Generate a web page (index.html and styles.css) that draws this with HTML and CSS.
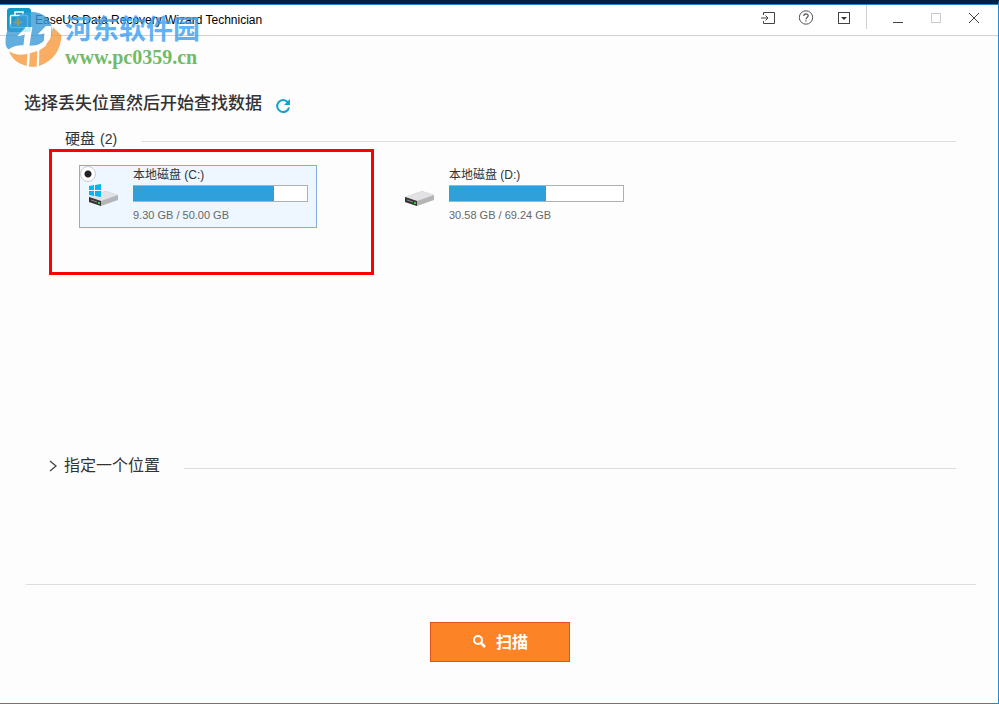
FILE: index.html
```html
<!DOCTYPE html>
<html lang="zh-CN">
<head>
    <meta charset="UTF-8">
    <meta name="viewport" content="width=device-width, initial-scale=1.0">
    <title>EaseUS Data Recovery Wizard Technician</title>
    <link rel="stylesheet" href="styles.css">
</head>
<body>

    <div class="window">
        <header class="titlebar">
            <svg class="app-icon" width="24" height="24" viewBox="0 0 24 24">
                <rect width="24" height="24" rx="3" fill="#0f9ccb"/>
                <path d="M8 7V4h8v3" fill="none" stroke="#fff" stroke-width="1.5"/>
                <rect x="3.5" y="7.5" width="17" height="12" rx="1" fill="none" stroke="#fff" stroke-width="1.5"/>
            </svg>
            <h1 class="app-title">EaseUS Data Recovery Wizard Technician</h1>
            <div class="tools">
                <button type="button" aria-label="导入">
                    <svg width="14" height="14" viewBox="0 0 14 14" fill="none" stroke="#444">
                        <path d="M2.5 4V1.5h11v11h-11V10M0 7h7M4.5 4.5L7 7 4.5 9.500"/>
                    </svg>
                </button>
                <button type="button" aria-label="帮助">
                    <svg width="16" height="16" viewBox="0 0 16 16" fill="none" stroke="#555">
                        <circle cx="8" cy="7.5" r="6.7"/>
                        <path d="M5.800 6C5.8 3.300 10.2 3.300 10.2 5.8C10.2 7.3 8 7.3 8 9.2M8 10.3v1.2" stroke-width="1.2"/>
                    </svg>
                </button>
                <button type="button" aria-label="菜单">
                    <svg width="14" height="14" viewBox="0 0 14 14">
                        <rect x="1.5" y="1.5" width="11" height="11" fill="none" stroke="#444"/>
                        <path d="M4 6h6L7 9z" fill="#333"/>
                    </svg>
                </button>
            </div>
            <div class="window-buttons">
                <button type="button" aria-label="最小化">
                    <svg width="12" height="12" viewBox="0 0 12 12"><path d="M1 10.5h10" stroke="#444"/></svg>
                </button>
                <button type="button" aria-label="最大化" disabled>
                    <svg width="12" height="12" viewBox="0 0 12 12"><rect x="1.5" y="1.5" width="9" height="9" fill="none" stroke="#ccc"/></svg>
                </button>
                <button type="button" aria-label="关闭">
                    <svg width="12" height="12" viewBox="0 0 12 12"><path d="M1 1l10 10M11 1L1 11" stroke="#444"/></svg>
                </button>
            </div>
        </header>

        <main class="content">
            <div class="heading">
                <h2>选择丢失位置然后开始查找数据</h2>
                <button type="button" class="refresh" aria-label="刷新">
                    <svg width="16" height="16" viewBox="0 0 16 16">
                        <path d="M12.8 4.2A6 6 0 1 0 14 9.5" fill="none" stroke="#14a0cc" stroke-width="2"/>
                        <path d="M15 1v6H9z" fill="#14a0cc"/>
                    </svg>
                </button>
            </div>

            <section class="disks">
                <h3 class="section-title">硬盘 <span class="count">(2)</span></h3>
                <div class="disk-list">
                    <label class="disk">
                        <input type="radio" name="disk" checked>
                        <svg class="disk-icon" width="30" height="24" viewBox="0 0 30 24">
                            <path d="M0 13L17 7l12 4v5L12 22 0 18z" fill="#b5b5b7"/>
                            <path d="M0 13L17 7l12 4-17 6z" fill="#e2e2e5"/>
                            <path d="M0 13l12 4v5L0 18z" fill="#353535"/>
                            <path d="M2 16l6 2" stroke="#888"/>
                            <rect x="9" y="18" width="2" height="2" fill="#25d33c"/>
                            <path d="M0 2l5-1v5H0zM6 1l6-1v6H6zM0 7h5v5l-5-1zM6 7h6v6l-6-1z" fill="#00b7f0"/>
                        </svg>
                        <span class="disk-info">
                            <span class="disk-name">本地磁盘 (C:)</span>
                            <span class="usage"><span class="usage-fill" style="width: 81%"></span></span>
                            <span class="disk-size">9.30 GB / 50.00 GB</span>
                        </span>
                    </label>
                    <label class="disk">
                        <input type="radio" name="disk">
                        <svg class="disk-icon" width="30" height="24" viewBox="0 0 30 24">
                            <path d="M0 13L17 7l12 4v5L12 22 0 18z" fill="#b5b5b7"/>
                            <path d="M0 13L17 7l12 4-17 6z" fill="#e2e2e5"/>
                            <path d="M0 13l12 4v5L0 18z" fill="#353535"/>
                            <path d="M2 16l6 2" stroke="#888"/>
                            <rect x="9" y="18" width="2" height="2" fill="#25d33c"/>
                        </svg>
                        <span class="disk-info">
                            <span class="disk-name">本地磁盘 (D:)</span>
                            <span class="usage"><span class="usage-fill" style="width: 56%"></span></span>
                            <span class="disk-size">30.58 GB / 69.24 GB</span>
                        </span>
                    </label>
                    <div class="highlight"></div>
                </div>
            </section>

            <section class="location">
                <svg class="arrow" width="9" height="12" viewBox="0 0 9 12"><path d="M1 1l6 5-6 5" fill="none" stroke="#444" stroke-width="1.3"/></svg>
                <h3 class="section-title">指定一个位置</h3>
            </section>
        </main>

        <footer class="footer">
            <button type="button" class="scan">
                <svg width="14" height="14" viewBox="0 0 14 14" fill="none" stroke="#fff">
                    <circle cx="6" cy="6" r="4" stroke-width="2"/>
                    <path d="M9 9l4 4" stroke-width="2.5"/>
                </svg>
                扫描
            </button>
        </footer>
    </div>

    <div class="watermark">
        <svg width="58" height="58" viewBox="9 15 174 174">
            <!-- blue upper half with the two white strokes -->
            <path d="M11 114C8 62 42 18 90 18C122 18 146 38 151 69C157 92 142 112 118 117L80 119C56 116 38 128 26 131C17 131 12 124 11 114z" fill="#3b9bd8"/>
            <path d="M46 90L72 63H91L82 121L64 122L68 84C62 89 54 91 46 90z" fill="#fff"/>
            <path d="M108 84L132 60H149L142 152C136 158 128 162 122 163L127 82C121 85 115 86 108 84z" fill="#fff"/>
            <!-- orange lower half -->
            <path d="M21 136C38 147 58 149 76 143L74 180C49 174 29 159 21 136zM84 141L106 132L104 182H81zM112 129C137 116 151 97 153 64L178 88C178 132 152 167 111 180z" fill="#f79a3c"/>
            <path d="M20 130C44 115 64 117 82 121C101 123 120 112 136 95L132 119C102 145 55 149 20 130z" fill="#fff"/>
            <!-- small cross over the app icon -->
            <path d="M48 37v23M37 49h23" stroke="#b59c43" stroke-width="7"/>
        </svg>
        <div class="watermark-text">
            <span class="site-name">河东软件园</span>
            <span class="site-url">www.pc0359.cn</span>
        </div>
    </div>

</body>
</html>
```
FILE: styles.css
```css
* {
    box-sizing: border-box;
}
body {
    margin: 0;
    font-family: "Liberation Sans", "Noto Sans CJK SC", sans-serif;
    font-size: 12px;
    color: #333;
    background-color: #fdfdfd;
}
h1, h2, h3 {
    margin: 0;
    font-weight: normal;
}
svg {
    display: block;
    flex-shrink: 0;
}
button {
    display: flex;
    align-items: center;
    justify-content: center;
    padding: 0;
    border: none;
    background: none;
    font-family: inherit;
    cursor: pointer;
}
.window {
    display: flex;
    flex-direction: column;
    min-height: 100vh;
    border-top: 4px solid #00204a;
    border-right: 1px solid #2687d3;
    border-bottom: 1px solid #2687d3;
}

/* title bar */
.titlebar {
    display: flex;
    height: 32px;
    padding: 0 5px 0 7px;
    background-color: #fff;
    border-top: 1px solid #2687d3;
    border-bottom: 1px solid #d0d0d0;
}
.app-icon {
    margin-top: 3px;
}
.app-title {
    margin-left: 4px;
    font-size: 12px;
    line-height: 30px;
    color: #000;
}
.tools {
    display: flex;
    height: 24px;
    margin-left: auto;
    padding-right: 3px;
    border-right: 1px solid #d0d0d0;
}
.tools button,
.window-buttons button {
    width: 38px;
    height: 26px;
}
.window-buttons {
    display: flex;
    padding-left: 12px;
}

/* content */
.content {
    flex: 1;
    margin: 0 22px 0 26px;
    border-bottom: 1px solid #ddd;
}
.heading {
    display: flex;
    align-items: center;
    gap: 13px;
    margin: 56px 0 0 -2px;
}
.heading h2 {
    font-size: 17px;
    font-weight: 500;
    line-height: 24px;
}
.refresh {
    padding-top: 4px;
}
.section-title {
    display: flex;
    flex: 1;
    align-items: center;
    font-size: 16px;
    line-height: 24px;
}
.section-title::after {
    content: "";
    flex: 1;
    height: 1px;
    margin: 5px 0 0 24px;
    background-color: #ddd;
}
.disks {
    margin: 11px 20px 0 39px;
}
.disks .section-title {
    font-size: 15px;
}
.count {
    margin-left: 5px;
    font-size: 14px;
}
.disk-list {
    position: relative;
    display: flex;
    gap: 78px;
    min-height: 303px;
    padding: 14px 0 0 14px;
}
.disk {
    display: flex;
    position: relative;
    width: 238px;
    height: 63px;
    padding: 0 8px 0 9px;
    border: 1px solid transparent;
}
.disk:has(input:checked) {
    background-color: #eef6ff;
    border-color: #86addb;
}
.disk input {
    position: absolute;
    top: 0;
    left: 0;
    width: 16px;
    height: 16px;
    margin: 0;
    appearance: none;
    border: 1px solid #ccc;
    border-radius: 50%;
    background: radial-gradient(circle, #222 3px, #fff 4px);
}
.disk input:not(:checked) {
    opacity: 0;
}
.disk-icon {
    margin-top: 18px;
}
.disk-info {
    flex: 1;
    margin-left: 14px;
}
.disk-name,
.usage,
.usage-fill,
.disk-size {
    display: block;
}
.disk-name {
    line-height: 19px;
}
.usage {
    height: 17px;
    border: 1px solid #b0b0b0;
    border-left: none;
    background-color: #fff;
}
.usage-fill {
    height: 100%;
    background-color: #2fa0d9;
}
.disk-size {
    padding-top: 4px;
    font-size: 11px;
    line-height: 18px;
    color: #666;
}
.highlight {
    position: absolute;
    top: -2px;
    left: -16px;
    width: 325px;
    height: 126px;
    border: 3px solid #f00;
    pointer-events: none;
}
.location {
    display: flex;
    align-items: center;
    gap: 6px;
    margin: 0 20px 0 23px;
}

/* footer */
.footer {
    display: flex;
    justify-content: center;
    padding: 37px 0 41px 2px;
}
.scan {
    gap: 10px;
    width: 140px;
    height: 40px;
    padding-bottom: 2px;
    border: 1px solid #e0521a;
    background-color: #fd8426;
    color: #fff;
    font-size: 16px;
    font-weight: bold;
}

/* site watermark */
.watermark {
    position: absolute;
    top: 11px;
    left: 5px;
    display: flex;
    gap: 2px;
    opacity: 0.8;
    pointer-events: none;
}
.watermark-text {
    display: flex;
    flex-direction: column;
    font-weight: bold;
}
.site-name {
    font-size: 27px;
    line-height: 38px;
    color: #3a9ff2;
}
.site-url {
    font-family: "Liberation Serif", serif;
    font-size: 20px;
    line-height: 16px;
    color: #4fab42;
}
```
